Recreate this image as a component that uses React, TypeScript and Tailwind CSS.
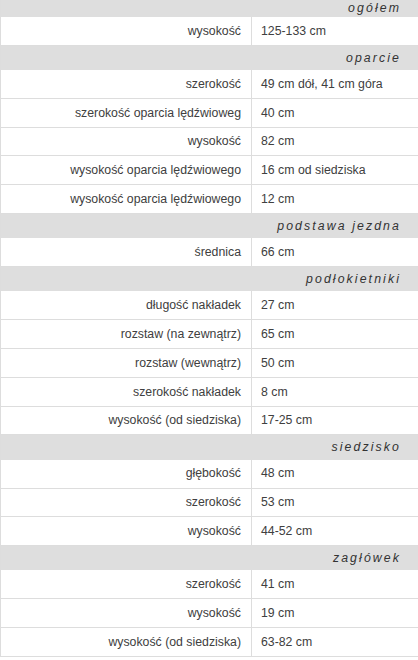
import React from "react";

type Section = { title: string; rows: [string, string][] };

const data: Section[] = [
  { title: "ogółem", rows: [["wysokość", "125-133 cm"]] },
  {
    title: "oparcie",
    rows: [
      ["szerokość", "49 cm dół, 41 cm góra"],
      ["szerokość oparcia lędźwioweg", "40 cm"],
      ["wysokość", "82 cm"],
      ["wysokość oparcia lędźwiowego", "16 cm od siedziska"],
      ["wysokość oparcia lędźwiowego", "12 cm"],
    ],
  },
  { title: "podstawa jezdna", rows: [["średnica", "66 cm"]] },
  {
    title: "podłokietniki",
    rows: [
      ["długość nakładek", "27 cm"],
      ["rozstaw (na zewnątrz)", "65 cm"],
      ["rozstaw (wewnątrz)", "50 cm"],
      ["szerokość nakładek", "8 cm"],
      ["wysokość (od siedziska)", "17-25 cm"],
    ],
  },
  {
    title: "siedzisko",
    rows: [
      ["głębokość", "48 cm"],
      ["szerokość", "53 cm"],
      ["wysokość", "44-52 cm"],
    ],
  },
  {
    title: "zagłówek",
    rows: [
      ["szerokość", "41 cm"],
      ["wysokość", "19 cm"],
      ["wysokość (od siedziska)", "63-82 cm"],
    ],
  },
];

export default function App() {
  return (
    <div
      className="w-[418px] h-[660px] overflow-hidden bg-white text-[12.3px] text-[#404040]"
      style={{ fontFamily: '"Liberation Sans", Arial, sans-serif' }}
    >
      <div className="flex flex-col border-l border-[#dddddd]">
        {data.map((s, si) => (
          <React.Fragment key={si}>
            <div
              className={
                (si === 0 ? "h-[17px]" : "h-[24.3px]") +
                " flex items-center justify-end bg-[#dedede] pr-[17px] italic tracking-[2.1px] text-[#333]"
              }
            >
              {s.title}
            </div>
            {s.rows.map(([label, value], ri) => (
              <div
                key={ri}
                className="flex h-[28.8px] border-b border-[#dddddd] bg-white"
              >
                <div className="flex w-[251px] shrink-0 items-center justify-end border-r border-[#dddddd] pr-[10px] whitespace-nowrap">
                  {label}
                </div>
                <div className="flex flex-1 items-center pl-[9px] whitespace-nowrap">
                  {value}
                </div>
              </div>
            ))}
          </React.Fragment>
        ))}
      </div>
    </div>
  );
}
